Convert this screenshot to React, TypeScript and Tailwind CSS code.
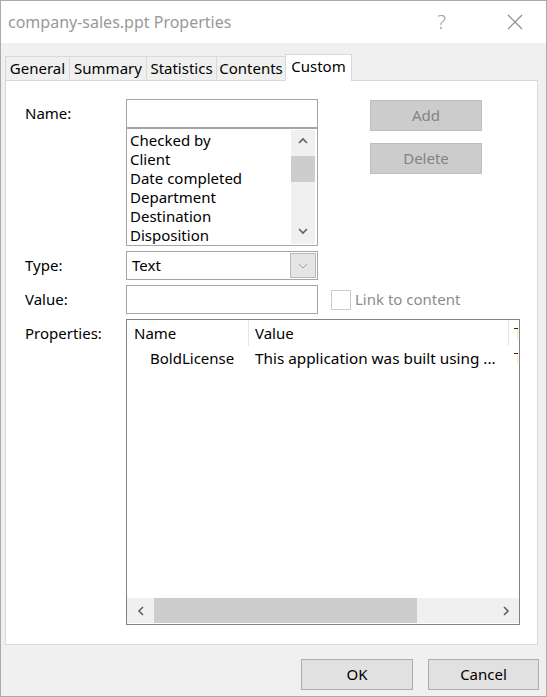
import React from "react";

const tabs = [
  { label: "General", w: "w-[65px]" },
  { label: "Summary", w: "w-[78px]" },
  { label: "Statistics", w: "w-[71px]" },
  { label: "Contents", w: "w-[70px]" },
];

const names = ["Checked by", "Client", "Date completed", "Department", "Destination", "Disposition"];

function Chevron({ dir, color = "#606060", width = 1.6 }: { dir: "up" | "down" | "left" | "right"; color?: string; width?: number }) {
  const pts =
    dir === "up" ? "1,6 5,2 9,6" : dir === "down" ? "1,2 5,6 9,2" : dir === "left" ? "6,1 2,5 6,9" : "2,1 6,5 2,9";
  const size = dir === "up" || dir === "down" ? "w-[10px] h-[8px]" : "w-[8px] h-[10px]";
  const vb = dir === "up" || dir === "down" ? "0 0 10 8" : "0 0 8 10";
  return (
    <svg viewBox={vb} className={size}>
      <polyline points={pts} fill="none" stroke={color} strokeWidth={width} />
    </svg>
  );
}

function Label({ children }: { children: React.ReactNode }) {
  return <div className="w-[101px] h-[29px] flex items-center shrink-0">{children}</div>;
}

// the clipped third column only shows a sliver of its first letter
function Sliver() {
  return (
    <div className="flex-1 h-full flex items-center pl-[5px]">
      <div className="flex flex-col items-start">
        <div className="w-[4px] h-[1px] bg-[#5a1010]" />
        <div className="ml-[3px] w-[1px] h-[10px] bg-[#f1eaa8]" />
      </div>
    </div>
  );
}

export default function App() {
  return (
    <div className="w-[547px] h-[697px] border border-[#aaaaaa] flex flex-col bg-white text-[15px] text-black font-['Noto_Sans','Open_Sans',sans-serif]">
      {/* title bar */}
      <div className="h-[42px] shrink-0 flex items-center bg-white">
        <div className="pl-[7px] text-[16px] text-[#999999] flex-1">company-sales.ppt Properties</div>
        <div className="text-[20px] text-[#a0a0a0] mr-[61px] font-light">?</div>
        <svg viewBox="0 0 16 16" className="w-[16px] h-[16px] mr-[23px]">
          <path d="M1 1 L15 15 M15 1 L1 15" stroke="#8a8a8a" strokeWidth="1.1" fill="none" />
        </svg>
      </div>

      {/* body */}
      <div className="flex-1 bg-[#f0f0f0] pl-[4px] pt-[11px] flex flex-col">
        {/* tabs */}
        <div className="flex items-end h-[26px]">
          {tabs.map((t) => (
            <div
              key={t.label}
              className={`${t.w} h-[24px] -ml-px first:ml-0 border border-b-0 border-[#d9d9d9] bg-[#f0f0f0] flex items-center justify-center`}
            >
              {t.label}
            </div>
          ))}
          <div className="w-[67px] h-[27px] -ml-px -mb-px relative z-10 border border-b-0 border-[#d9d9d9] bg-white flex items-center justify-center pb-[3px]">
            Custom
          </div>
        </div>

        {/* panel */}
        <div className="w-[533px] h-[565px] border border-[#d9d9d9] bg-white pt-[18px] pl-[19px] flex flex-col gap-[5px]">
          {/* name row */}
          <div className="flex">
            <Label>Name:</Label>
            <div className="w-[192px] flex flex-col">
              <div className="h-[29px] border border-[#a5a5a5] bg-white" />
              <div className="h-[118px] border border-[#a5a5a5] bg-white flex p-px">
                <div className="flex-1 pl-[2px] pt-px leading-[19px] overflow-hidden">
                  {names.map((n) => (
                    <div key={n} className="h-[19px] whitespace-nowrap">
                      {n}
                    </div>
                  ))}
                </div>
                <div className="w-[24px] mr-px bg-[#f0f0f0] flex flex-col">
                  <div className="h-[26px] flex items-center justify-center pb-[4px]">
                    <Chevron dir="up" />
                  </div>
                  <div className="h-[26px] bg-[#cdcdcd]" />
                  <div className="flex-1" />
                  <div className="h-[26px] flex items-center justify-center">
                    <Chevron dir="down" />
                  </div>
                </div>
              </div>
            </div>
            <div className="ml-[52px] pt-px flex flex-col gap-[12px]">
              <div className="w-[112px] h-[31px] bg-[#cccccc] border border-[#bfbfbf] text-[#838383] flex items-center justify-center">
                Add
              </div>
              <div className="w-[112px] h-[31px] bg-[#cccccc] border border-[#bfbfbf] text-[#838383] flex items-center justify-center">
                Delete
              </div>
            </div>
          </div>

          {/* type row */}
          <div className="flex">
            <Label>Type:</Label>
            <div className="w-[192px] h-[29px] border border-[#a5a5a5] bg-white flex items-center p-px">
              <div className="flex-1 pl-[4px]">Text</div>
              <div className="w-[26px] h-[25px] bg-[#e5e5e5] border border-[#b9b9b9] flex items-center justify-center">
                <Chevron dir="down" color="#a0a0a0" width={1} />
              </div>
            </div>
          </div>

          {/* value row */}
          <div className="flex items-center">
            <Label>Value:</Label>
            <div className="w-[192px] h-[29px] border border-[#a5a5a5] bg-white" />
            <div className="ml-[13px] w-[20px] h-[20px] border border-[#cccccc] bg-white" />
            <div className="ml-[4px] text-[#8c8c8c]">Link to content</div>
          </div>

          {/* properties row */}
          <div className="flex">
            <Label>Properties:</Label>
            <div className="w-[394px] h-[306px] border border-[#828282] bg-white flex flex-col">
              <div className="h-[26px] flex items-center">
                <div className="w-[122px] pl-[7px] h-full flex items-center border-r border-[#e5e5e5]">Name</div>
                <div className="w-[260px] pl-[6px] h-full flex items-center border-r border-[#e5e5e5]">Value</div>
                <Sliver />
              </div>
              <div className="h-[24px] flex items-center">
                <div className="w-[122px] pl-[23px] whitespace-nowrap">BoldLicense</div>
                <div className="w-[260px] pl-[6px] whitespace-nowrap text-[15.3px]">This application was built using ...</div>
                <Sliver />
              </div>
              <div className="flex-1" />
              <div className="h-[25px] mb-px bg-[#f0f0f0] flex">
                <div className="w-[27px] flex items-center justify-center">
                  <Chevron dir="left" />
                </div>
                <div className="w-[263px] bg-[#cdcdcd]" />
                <div className="flex-1" />
                <div className="w-[26px] flex items-center justify-center">
                  <Chevron dir="right" />
                </div>
              </div>
            </div>
          </div>
        </div>

        {/* buttons */}
        <div className="mt-[14px] flex justify-end gap-[15px] pr-[7px]">
          <div className="w-[112px] h-[31px] bg-[#e1e1e1] border border-[#adadad] flex items-center justify-center">OK</div>
          <div className="w-[111px] h-[31px] bg-[#e1e1e1] border border-[#adadad] flex items-center justify-center">Cancel</div>
        </div>
      </div>
    </div>
  );
}
